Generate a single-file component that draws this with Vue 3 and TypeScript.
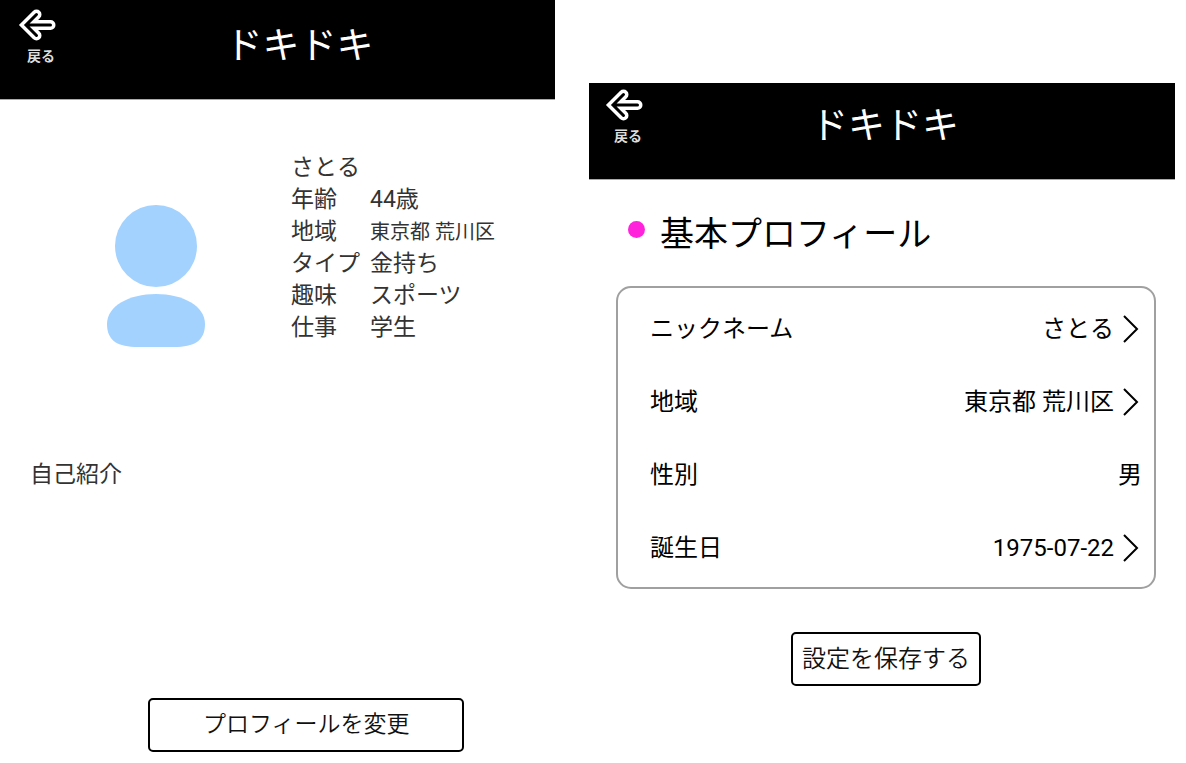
<script setup lang="ts">
interface Fact { label: string; value: string; small?: boolean }
interface Setting { label: string; value: string; editable: boolean }

const userName = 'さとる'

const facts: Fact[] = [
  { label: '年齢', value: '44歳' },
  { label: '地域', value: '東京都 荒川区', small: true },
  { label: 'タイプ', value: '金持ち' },
  { label: '趣味', value: 'スポーツ' },
  { label: '仕事', value: '学生' },
]

const settings: Setting[] = [
  { label: 'ニックネーム', value: 'さとる', editable: true },
  { label: '地域', value: '東京都 荒川区', editable: true },
  { label: '性別', value: '男', editable: false },
  { label: '誕生日', value: '1975-07-22', editable: true },
]
</script>

<template>
  <main class="screens">
    <section class="screen">
      <header class="bar bar-view">
        <button class="back" type="button">
          <svg class="arrow" viewBox="0 0 38 32" aria-hidden="true">
            <path class="arrow-outer" d="M18.5 5.5 8 16 18.5 26.5M8 16H32.5" />
            <path class="arrow-inner" d="M18.5 5.5 8 16 18.5 26.5M9 16H32.5" />
          </svg>
          <span>戻る</span>
        </button>
        <h1>ドキドキ</h1>
      </header>

      <div class="summary">
        <svg class="avatar" viewBox="0 0 98 142" role="img" aria-label="さとる">
          <circle cx="49" cy="41" r="41" />
          <path d="M49 89C76 89 98 101 98 119C98 136 87 142 67 142H31C11 142 0 136 0 119C0 101 22 89 49 89Z" />
        </svg>
        <div class="details">
          <p class="name">{{ userName }}</p>
          <dl class="facts">
            <div v-for="fact in facts" :key="fact.label" class="fact">
              <dt>{{ fact.label }}</dt>
              <dd :class="{ small: fact.small }">{{ fact.value }}</dd>
            </div>
          </dl>
        </div>
      </div>

      <h2 class="intro">自己紹介</h2>
      <button class="action change" type="button">プロフィールを変更</button>
    </section>

    <section class="screen screen-edit">
      <header class="bar bar-edit">
        <button class="back" type="button">
          <svg class="arrow" viewBox="0 0 38 32" aria-hidden="true">
            <path class="arrow-outer" d="M18.5 5.5 8 16 18.5 26.5M8 16H32.5" />
            <path class="arrow-inner" d="M18.5 5.5 8 16 18.5 26.5M9 16H32.5" />
          </svg>
          <span>戻る</span>
        </button>
        <h1>ドキドキ</h1>
      </header>

      <h2 class="heading"><span class="dot"></span>基本プロフィール</h2>

      <dl class="settings">
        <div v-for="item in settings" :key="item.label" class="setting">
          <dt>{{ item.label }}</dt>
          <dd>
            <button v-if="item.editable" class="edit" type="button">
              {{ item.value }}
              <svg class="chevron" viewBox="0 0 16 28" aria-hidden="true">
                <path d="M1 1 14 14 1 27" />
              </svg>
            </button>
            <template v-else>{{ item.value }}</template>
          </dd>
        </div>
      </dl>

      <button class="action save" type="button">設定を保存する</button>
    </section>
  </main>
</template>

<style>
body {
  background: #fff;
}
</style>

<style scoped>
.screens {
  display: grid;
  grid-template-columns: 555fr 586fr;
  gap: 34px;
  padding-right: 11px;
  font-family: Roboto, "Noto Sans CJK JP", sans-serif;
  font-size: 24px;
  line-height: 32px;
  color: #000;
}
h1, h2, p, dl, dd {
  margin: 0;
  font-weight: 400;
}
button {
  font: inherit;
  color: inherit;
  background: none;
  border: 0;
  padding: 0;
  cursor: pointer;
}
.screen {
  display: flex;
  flex-direction: column;
  min-width: 0;
  color: #333;
}
.screen-edit {
  padding-top: 83px;
  color: #000;
}
.bar {
  display: flex;
  align-items: flex-start;
  box-sizing: border-box;
  background: #000;
  border-bottom: 1px solid #aaa;
  color: #fff;
}
.bar-view {
  height: 100px;
  padding: 9px 0 0 18px;
}
.bar-edit {
  height: 97px;
  padding: 6px 36px 0 16px;
}
.back {
  display: flex;
  flex-direction: column;
  align-items: center;
  width: 46px;
  font-size: 14px;
  font-weight: 700;
  line-height: 20px;
  color: #ddd;
  gap: 5px;
}
.back svg {
  align-self: flex-start;
}
.arrow {
  width: 38px;
  height: 32px;
}
.arrow path {
  fill: none;
  stroke-linecap: round;
}
.arrow-outer {
  stroke: #fff;
  stroke-width: 10;
}
.arrow-inner {
  stroke: #000;
  stroke-width: 3;
}
.bar h1 {
  flex: 1;
  padding: 12px 20px 0 0;
  font-size: 37px;
  line-height: 52px;
  text-align: center;
}
.summary {
  display: flex;
  padding: 52px 20px 0 107px;
  font-size: 23px;
}
.avatar {
  width: 98px;
  height: 142px;
  margin: 53px 86px 0 0;
  fill: #a3d2ff;
}
.fact {
  display: grid;
  grid-template-columns: 79px auto;
}
.small {
  font-size: 20px;
}
.intro {
  margin: 112px 30px 0;
  font-size: 23px;
}
.action {
  box-sizing: border-box;
  height: 54px;
  background: #fff;
  border: 2px solid #000;
  border-radius: 5px;
  font-weight: 350;
  color: #111;
}
.change {
  width: 57%;
  margin: 207px 0 11px 148px;
  font-size: 23px;
}
.heading {
  display: flex;
  align-items: center;
  margin: 28px 0 0 39px;
  font-size: 34px;
  line-height: 52px;
}
.dot {
  width: 17px;
  height: 17px;
  margin: 0 15px 10px 0;
  border-radius: 50%;
  background: #ff24dc;
}
.settings {
  margin: 26px 19px 43px 27px;
  padding: 4px 12px 3px 32px;
  border: 2px solid #a0a0a0;
  border-radius: 15px;
}
.setting {
  display: flex;
  align-items: center;
  justify-content: space-between;
  height: 73px;
}
.edit {
  display: flex;
  align-items: center;
  gap: 9px;
}
.chevron {
  width: 16px;
  height: 28px;
  margin-right: 3px;
  fill: none;
  stroke: #000;
  stroke-width: 2;
}
.save {
  align-self: center;
  width: 190px;
  margin-left: 8px;
}
</style>
